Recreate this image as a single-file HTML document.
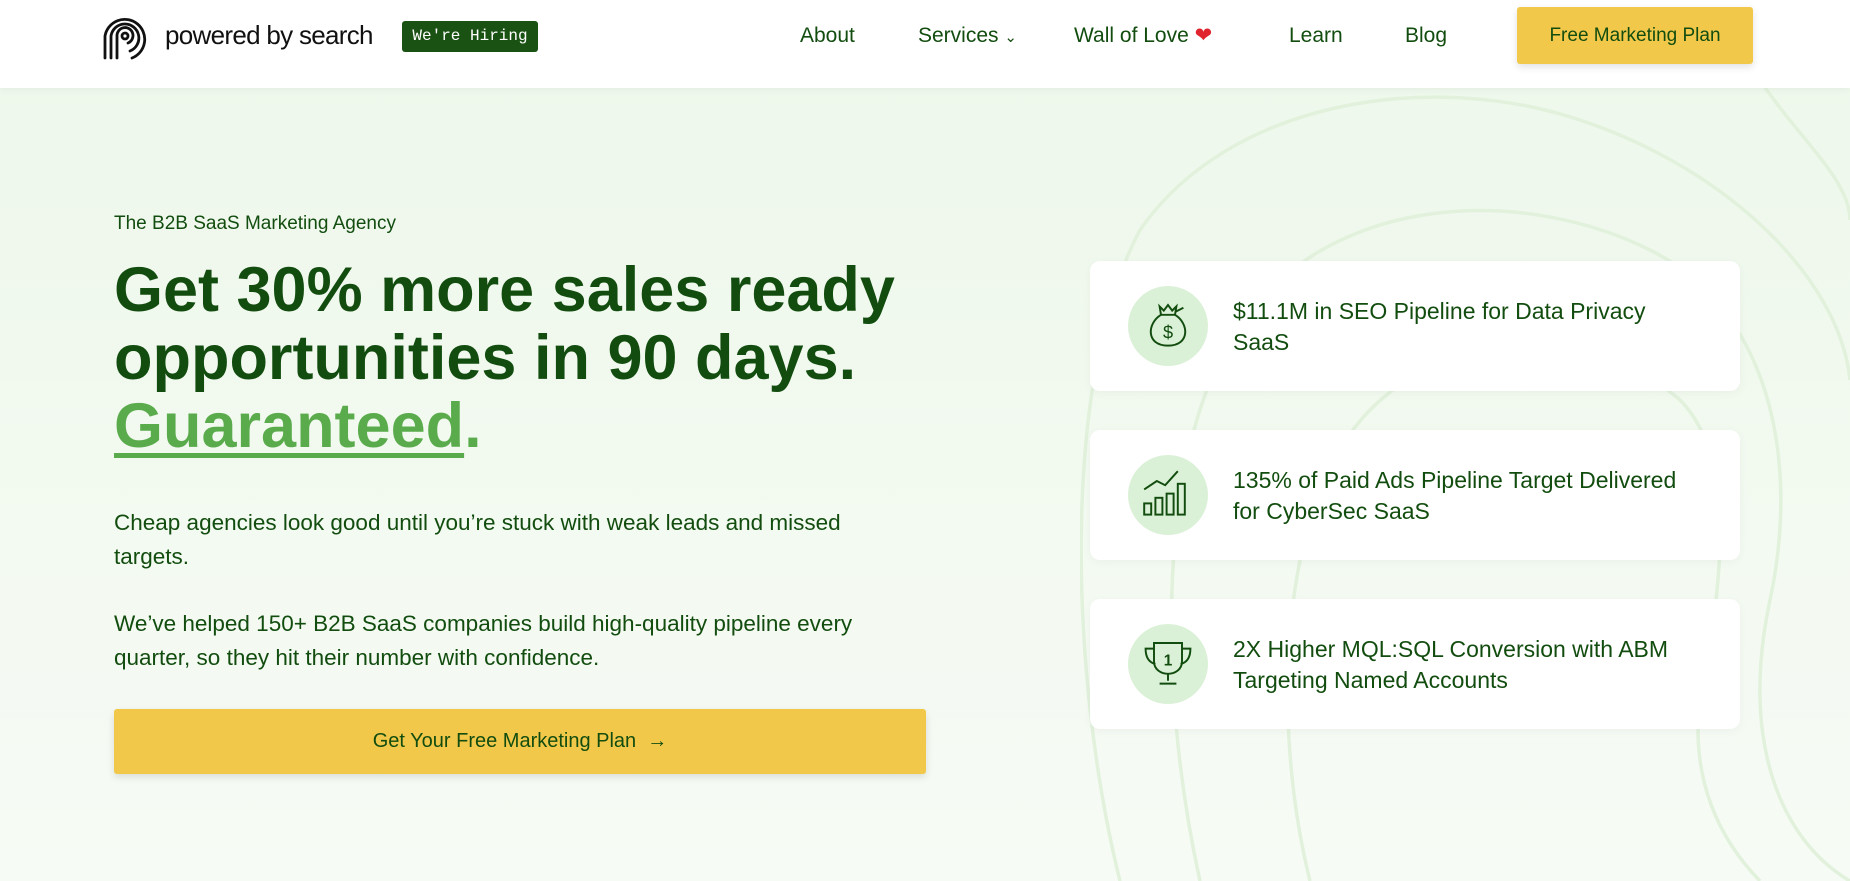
<!DOCTYPE html>
<html><head><meta charset="utf-8"><style>
*{margin:0;padding:0;box-sizing:border-box}
body{width:1850px;height:881px;overflow:hidden;font-family:"Liberation Sans",Arial,sans-serif;background:linear-gradient(180deg,#edf7ea 0%,#f3faf1 60%,#f6fbf5 100%);position:relative;color:#124d0f}
.nav{position:absolute;left:0;top:0;width:1850px;height:88px;background:#fff;box-shadow:0 2px 6px rgba(0,0,0,.04)}
.logo{position:absolute;left:100px;top:12px}
.logotext{position:absolute;left:165px;top:20px;font-size:26px;color:#111;letter-spacing:-0.7px}
.hire{position:absolute;left:402px;top:21px;width:136px;height:31px;background:#1a5213;border-radius:3px;color:#fff;font-family:"Liberation Mono",monospace;font-size:16px;line-height:31px;text-align:center}
.ni{position:absolute;top:24px;font-size:21px;line-height:24px;color:#124d0f}
.btn{position:absolute;left:1517px;top:7px;width:236px;height:57px;background:#f2c84b;border-radius:3px;box-shadow:0 3px 8px rgba(0,0,0,.12);font-size:19px;line-height:57px;text-align:center;color:#124d0f}
.eb{position:absolute;left:114px;top:213px;font-size:19px}
h1{position:absolute;left:114px;top:256px;font-size:63px;line-height:68px;font-weight:700;color:#124d0f}
h1 u{color:#5aab4c;text-decoration-thickness:5px;text-underline-offset:6px}
h1 span{color:#5aab4c}
.p{position:absolute;left:114px;font-size:22.5px;line-height:34px;width:760px}
.cta{position:absolute;left:114px;top:709px;width:812px;height:65px;background:#f2c84b;border-radius:3px;box-shadow:0 3px 8px rgba(0,0,0,.12);text-align:center;line-height:65px;font-size:20px;color:#124d0f}
.card{position:absolute;left:1090px;width:650px;height:130px;background:#fff;border-radius:10px;box-shadow:0 2px 10px rgba(0,0,0,.04)}
.ic{position:absolute;left:38px;top:25px;width:80px;height:80px;border-radius:50%;background:#dbf1d7}
.ic svg{position:absolute;left:12px;top:12px}
.ct{position:absolute;left:143px;top:35px;font-size:23px;line-height:31px;color:#124d0f}
</style></head><body>
<svg style="position:absolute;left:1080px;top:80px" width="770" height="801" fill="none" stroke="#e1f1dc" stroke-width="3.5">
<path d="M40 801 C-10 600 -20 300 60 150 C150 20 350 -10 500 40 C650 90 760 200 770 300"/>
<path d="M120 801 C80 620 70 360 170 230 C270 110 450 110 570 170 C690 230 720 380 690 520 C660 660 700 760 770 801"/>
<path d="M230 801 C190 640 200 420 290 330 C380 240 520 250 600 320 C660 380 640 520 620 620 C610 700 640 760 680 801"/>
<path d="M680 0 C720 60 770 100 770 140"/>
</svg>
<div class="nav">
<svg class="logo" width="52" height="52" viewBox="0 0 52 52" fill="none" stroke="#111" stroke-width="2.8" stroke-linecap="round">
<path d="M5 46 V24 A20 20 0 1 1 32 46"/>
<path d="M11 46 V24 A14 14 0 1 1 30 39"/>
<path d="M17 46 V24 A8 8 0 1 1 28 31"/>
<circle cx="25" cy="24" r="3"/>
</svg>
<div class="logotext">powered by search</div>
<div class="hire">We're Hiring</div>
<div class="ni" style="left:800px">About</div>
<div class="ni" style="left:918px">Services <span style="font-size:15px">&#8964;</span></div>
<div class="ni" style="left:1074px">Wall of Love <span style="color:#e0242e;font-size:21px">&#10084;</span></div>
<div class="ni" style="left:1289px">Learn</div>
<div class="ni" style="left:1405px">Blog</div>
<div class="btn">Free Marketing Plan</div>
</div>
<div class="eb">The B2B SaaS Marketing Agency</div>
<h1>Get 30% more sales ready<br>opportunities in 90 days.<br><u>Guaranteed</u><span>.</span></h1>
<div class="p" style="top:506px">Cheap agencies look good until you’re stuck with weak leads and missed targets.</div>
<div class="p" style="top:607px">We’ve helped 150+ B2B SaaS companies build high-quality pipeline every quarter, so they hit their number with confidence.</div>
<div class="cta">Get Your Free Marketing Plan &nbsp;→</div>

<div class="card" style="top:261px"><div class="ic"><svg width="56" height="56" viewBox="0 0 40 40" fill="none" stroke="#124d0f" stroke-width="1.4"><path d="M14 6 L17 9 L20 5 L23 9 L26 6 L25 12 H15 Z"/><path d="M15 12 C5 18 4 34 20 34 C36 34 35 18 25 12"/><path d="M25 10 L31 7"/><text x="20" y="29" font-size="13" text-anchor="middle" fill="#124d0f" stroke="none" font-family="Liberation Sans">$</text></svg></div><div class="ct">$11.1M in SEO Pipeline for Data Privacy<br>SaaS</div></div>
<div class="card" style="top:430px"><div class="ic"><svg width="56" height="56" viewBox="0 0 40 40" fill="none" stroke="#124d0f" stroke-width="1.4"><path d="M3 16 L12 10 L18 13 L27 3"/><rect x="3" y="26" width="5" height="8"/><rect x="11" y="22" width="5" height="12"/><rect x="19" y="19" width="5" height="15"/><rect x="27" y="12" width="5" height="22"/></svg></div><div class="ct">135% of Paid Ads Pipeline Target Delivered<br>for CyberSec SaaS</div></div>
<div class="card" style="top:599px"><div class="ic"><svg width="56" height="56" viewBox="0 0 40 40" fill="none" stroke="#124d0f" stroke-width="1.4"><path d="M10 5 H30 V18 C30 24 25 27 20 27 C15 27 10 24 10 18 Z"/><path d="M10 9 H4 C4 16 7 19 11 20"/><path d="M30 9 H36 C36 16 33 19 29 20"/><path d="M20 27 V32 M14 34 H26"/><text x="20" y="21" font-size="11" font-weight="bold" text-anchor="middle" fill="#124d0f" stroke="none" font-family="Liberation Sans">1</text></svg></div><div class="ct">2X Higher MQL:SQL Conversion with ABM<br>Targeting Named Accounts</div></div>
</body></html>
